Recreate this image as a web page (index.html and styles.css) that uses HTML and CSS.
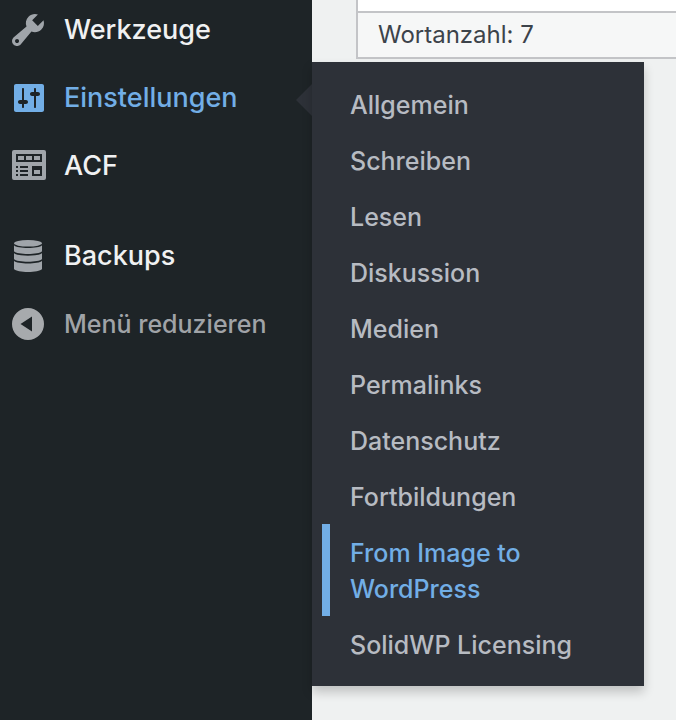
FILE: index.html
```html
<!DOCTYPE html>
<html lang="de">
<head>
    <meta charset="UTF-8">
    <meta name="viewport" content="width=device-width, initial-scale=1.0">
    <title>Einstellungen</title>
    <link rel="stylesheet" href="styles.css">
</head>
<body>
    <div class="admin">
        <nav class="sidebar">
            <ul class="menu">
                <li class="menu-item">
                    <a href="#" class="menu-link">
                        <svg class="icon" viewBox="0 0 20 20"><path d="M16.68 9.77c-1.34 1.34-3.3 1.67-4.95.99l-5.41 6.52c-.99.99-2.59.99-3.58 0s-.99-2.59 0-3.57l6.52-5.42c-.68-1.65-.35-3.61.99-4.95 1.28-1.28 3.12-1.62 4.72-1.06l-2.89 2.89 2.82 2.82 2.86-2.87c.53 1.58.18 3.39-1.08 4.65zM3.81 16.21c.4.39 1.04.39 1.43 0 .4-.4.4-1.04 0-1.43-.39-.4-1.03-.4-1.43 0-.39.39-.39 1.03 0 1.43z"/></svg>
                        Werkzeuge
                    </a>
                </li>
                <li class="menu-item open">
                    <a href="#" class="menu-link">
                        <svg class="icon" viewBox="0 0 20 20"><path d="M18 16V4c0-.55-.45-1-1-1H4c-.55 0-1 .45-1 1v12c0 .55.45 1 1 1h13c.55 0 1-.45 1-1zM8 11h1c.55 0 1 .45 1 1s-.45 1-1 1H8v1.5c0 .28-.22.5-.5.5s-.5-.22-.5-.5V13H6c-.55 0-1-.45-1-1s.45-1 1-1h1V5.5c0-.28.22-.5.5-.5s.5.22.5.5V11zm5-2h-1c-.55 0-1-.45-1-1s.45-1 1-1h1V5.5c0-.28.22-.5.5-.5s.5.22.5.5V7h1c.55 0 1 .45 1 1s-.45 1-1 1h-1v5.5c0 .28-.22.5-.5.5s-.5-.22-.5-.5V9z"/></svg>
                        Einstellungen
                    </a>
                    <ul class="submenu">
                        <li><a href="#" class="submenu-link">Allgemein</a></li>
                        <li><a href="#" class="submenu-link">Schreiben</a></li>
                        <li><a href="#" class="submenu-link">Lesen</a></li>
                        <li><a href="#" class="submenu-link">Diskussion</a></li>
                        <li><a href="#" class="submenu-link">Medien</a></li>
                        <li><a href="#" class="submenu-link">Permalinks</a></li>
                        <li><a href="#" class="submenu-link">Datenschutz</a></li>
                        <li><a href="#" class="submenu-link">Fortbildungen</a></li>
                        <li><a href="#" class="submenu-link active">From Image to WordPress</a></li>
                        <li><a href="#" class="submenu-link">SolidWP Licensing</a></li>
                    </ul>
                </li>
                <li class="menu-item">
                    <a href="#" class="menu-link">
                        <svg class="icon" viewBox="0 0 40 40"><path fill-rule="evenodd" d="M6 4h30a2 2 0 0 1 2 2v26a2 2 0 0 1-2 2H6a2 2 0 0 1-2-2V6a2 2 0 0 1 2-2zM8 8h26v8H8zM8 20h2v2H8zM8 24h2v2H8zM8 28h2v2H8zM12 20h8v2h-8zM12 24h8v2h-8zM12 28h8v2h-8zM24 20h10v10H24z"/><path d="M10 10h6v4h-6zM18 10h6v4h-6zM26 10h6v4h-6zM26 24h6v4h-6z"/></svg>
                        ACF
                    </a>
                </li>
                <li class="menu-item separated">
                    <a href="#" class="menu-link">
                        <svg class="icon" viewBox="0 0 40 40"><ellipse cx="20" cy="7.3" rx="14" ry="3.3"/><path d="M6 9.3c3 3.600 25 3.600 28 0v5.900c-3 3.600-25 3.600-28 0zM6 17c3 3.600 25 3.600 28 0v6c-3 3.600-25 3.600-28 0zM6 24.800c3 3.600 25 3.600 28 0V33c-3 4-25 4-28 0z"/></svg>
                        Backups
                    </a>
                </li>
                <li class="menu-item">
                    <button type="button" class="menu-link collapse">
                        <svg class="icon" viewBox="0 0 40 40"><path fill-rule="evenodd" d="M20 4a16 16 0 1 0 0 32a16 16 0 1 0 0-32zM12.5 20L24 12.5v15z"/></svg>
                        Menü reduzieren
                    </button>
                </li>
            </ul>
        </nav>
        <main class="content">
            <div class="editor">
                <div class="editor-area"></div>
                <div class="editor-status">Wortanzahl: 7</div>
            </div>
        </main>
    </div>
</body>
</html>
```
FILE: styles.css
```css
* {
    box-sizing: border-box;
}
body {
    margin: 0;
    background-color: #eff1f1;
    font-family: Inter, "Liberation Sans", sans-serif;
    font-size: 25px;
    line-height: 36px;
}
ul {
    list-style: none;
    margin: 0;
    padding: 0;
}
a {
    text-decoration: none;
}
.admin {
    display: flex;
    min-height: 100vh;
    overflow: hidden;
}
.sidebar {
    flex: 0 0 312px;
    background-color: #1e2427;
    font-weight: 500;
}
/* the list is scrolled slightly past its first item */
.menu {
    margin-top: -4px;
}
.menu-item {
    position: relative;
}
.menu-link {
    display: flex;
    align-items: center;
    gap: 16px;
    width: 100%;
    height: 68px;
    padding: 0 8px;
    color: #f0f1f2;
    font-size: 27px;
}
.icon {
    flex: none;
    width: 40px;
    height: 40px;
    fill: #a0a5aa;
}
.open .menu-link {
    color: #72aee6;
}
.open .icon {
    fill: #72aee6;
}
.separated {
    margin-top: 22px;
}
.collapse {
    border: none;
    background: none;
    color: #a0a3a7;
    font-family: inherit;
    font-size: 25px;
    font-weight: inherit;
    text-align: left;
    cursor: pointer;
}
.collapse .icon {
    fill: #a7aaad;
}
.submenu {
    position: absolute;
    top: -2px;
    left: 100%;
    z-index: 1;
    width: 332px;
    padding: 14px 0;
    background-color: #2d3138;
    box-shadow: 0 6px 10px rgba(0, 0, 0, 0.2);
}
.open::after {
    content: "";
    position: absolute;
    top: 20px;
    right: 0;
    border: 16px solid transparent;
    border-left-width: 0;
    border-right-color: #2d3138;
}
.submenu-link {
    display: block;
    margin-left: 10px;
    padding: 11px 20px 9px;
    border-left: 8px solid transparent;
    color: #b7bbc2;
}
.submenu-link.active {
    border-left-color: #72aee6;
    color: #72aee6;
}
.submenu-link:hover {
    color: #72aee6;
}
.content {
    flex: 1;
    padding-left: 44px;
}
.editor {
    border-left: 2px solid #c3c4c7;
    border-bottom: 2px solid #c3c4c7;
}
.editor-area {
    height: 11px;
    background-color: #fff;
}
.editor-status {
    padding: 4px 20px;
    border-top: 2px solid #c3c4c7;
    background-color: #f6f7f7;
    color: #3c434a;
    font-size: 24px;
}
```
